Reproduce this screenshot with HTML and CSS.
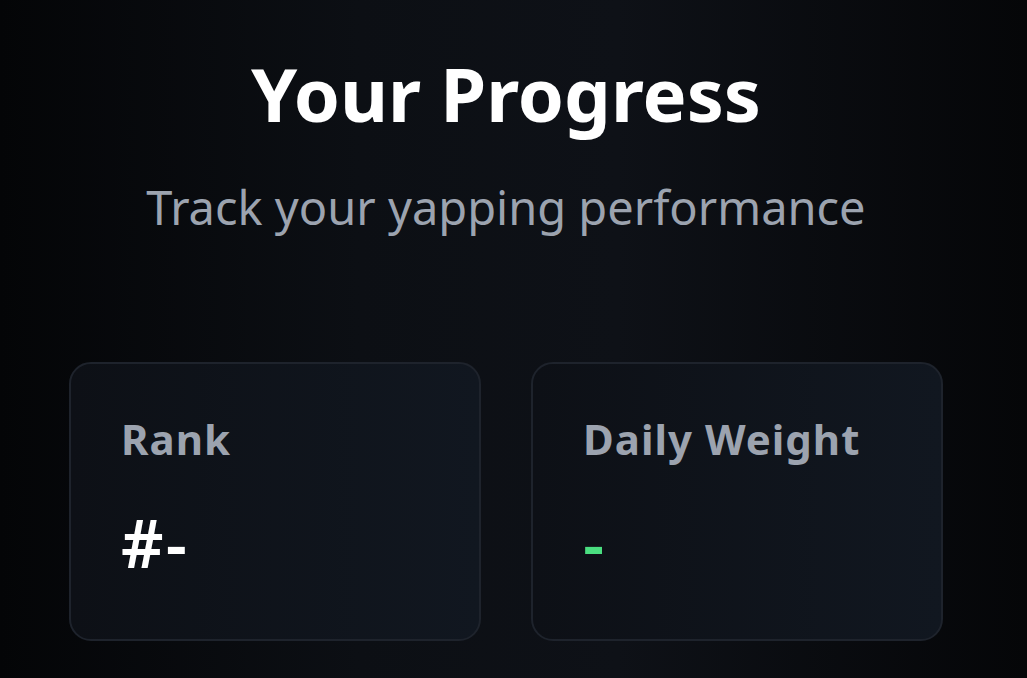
FILE: index.html
```html
<!DOCTYPE html>
<html lang="en">
<head>
    <meta charset="UTF-8">
    <meta name="viewport" content="width=device-width, initial-scale=1.0">
    <title>Your Progress</title>
    <link rel="stylesheet" href="styles.css">
</head>
<body>
    <div class="page">
        <!-- header -->
        <div class="header">
            <h1 class="title">Your Progress</h1>
            <p class="subtitle">Track your yapping performance</p>
        </div>

        <!-- stats -->
        <div class="stats">
            <div class="card">
                <div class="card-label">Rank</div>
                <div class="card-value">#-</div>
            </div>
            <div class="card">
                <div class="card-label">Daily Weight</div>
                <div class="card-value green">-</div>
            </div>
        </div>
    </div>
</body>
</html>
```

FILE: styles.css
```css
html, body {
    height: 100%;
}
body {
    margin: 0;
    font-family: "Noto Sans", "Open Sans", sans-serif;
    color: #ffffff;
    background: linear-gradient(90deg, #040507 0%, #0c0f14 35%, #0e1117 60%, #050608 100%);
    overflow: hidden;
}
.page {
    padding: 0 69px;
    box-sizing: border-box;
    width: 1012px;
}
.header {
    text-align: center;
    padding-top: 42px;
}
.title {
    margin: 0;
    font-size: 74px;
    font-weight: 700;
    line-height: 104px;
}
.subtitle {
    margin: 29px 0 0 0;
    font-size: 47px;
    line-height: 64px;
    color: #9ca3af;
}
.stats {
    display: grid;
    grid-template-columns: 1fr 1fr;
    gap: 50px;
    margin-top: 123px;
}
.card {
    height: 279px;
    box-sizing: border-box;
    padding: 47px 50px 0 50px;
    border: 2px solid #1e232c;
    border-radius: 22px;
    background: linear-gradient(90deg, #0d1016 0%, #111720 100%);
}
.card-label {
    font-size: 42px;
    font-weight: 700;
    line-height: 56px;
    color: #9ca3af;
    letter-spacing: 1px;
}
.card-value {
    margin-top: 43px;
    font-size: 66px;
    font-weight: 600;
    line-height: 64px;
    letter-spacing: 2px;
}
.green {
    color: #4ade80;
}
```
